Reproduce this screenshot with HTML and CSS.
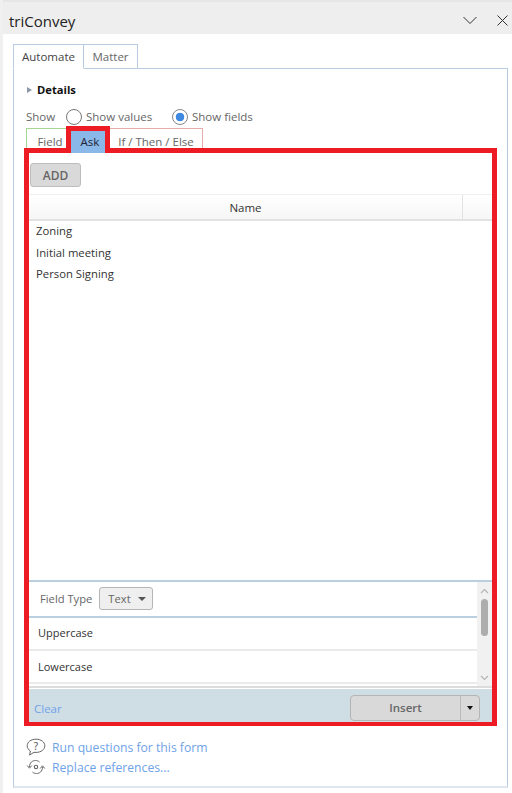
FILE: index.html
```html
<!DOCTYPE html>
<html lang="en">
<head>
    <meta charset="UTF-8">
    <meta name="viewport" content="width=device-width, initial-scale=1.0">
    <title>triConvey</title>
    <link rel="stylesheet" href="styles.css">
</head>
<body>

    <div class="titlebar">
        <span class="app-name">triConvey</span>
        <div class="window-icons">
            <svg width="14" height="9" viewBox="0 0 14 9"><path d="M0.5 1 L7 7.5 L13.5 1" fill="none" stroke="#333" stroke-width="1"/></svg>
            <svg width="11" height="11" viewBox="0 0 11 11"><path d="M0.5 0.5 L10.5 10.5 M10.5 0.5 L0.5 10.5" fill="none" stroke="#333" stroke-width="1"/></svg>
        </div>
    </div>

    <div class="pane">
        <div class="main-tabs">
            <div class="main-tab active">Automate</div>
            <div class="main-tab">Matter</div>
        </div>

        <div class="main-panel">
            <div class="details"><span class="triangle"></span>Details</div>

            <div class="show-row">
                <span class="show-label">Show</span>
                <span class="radio"></span><span class="radio-text">Show values</span>
                <span class="radio checked"></span><span>Show fields</span>
            </div>

            <div class="sub-tabs">
                <div class="sub-tab field">Field</div>
                <div class="sub-tab ask">Ask</div>
                <div class="sub-tab condition">If / Then / Else</div>
            </div>

            <div class="ask-box">
                <div class="add-row"><button class="add-button">ADD</button></div>

                <div class="table-head">
                    <div class="name-col">Name</div>
                    <div class="spare-col"></div>
                </div>

                <div class="name-list">
                    <div>Zoning</div>
                    <div>Initial meeting</div>
                    <div>Person Signing</div>
                </div>

                <div class="options">
                    <div class="options-list">
                        <div class="field-type">
                            <span>Field Type</span>
                            <div class="type-select">Text<span class="caret"></span></div>
                        </div>
                        <div class="option">Uppercase</div>
                        <div class="option">Lowercase</div>
                    </div>
                    <div class="scrollbar">
                        <svg width="9" height="6" viewBox="0 0 9 6"><path d="M1 5 L4.5 1.5 L8 5" fill="none" stroke="#b5b5b5" stroke-width="1.2"/></svg>
                        <div class="thumb"></div>
                        <svg width="9" height="6" viewBox="0 0 9 6"><path d="M1 1 L4.5 4.5 L8 1" fill="none" stroke="#b5b5b5" stroke-width="1.2"/></svg>
                    </div>
                </div>

                <div class="footer">
                    <span class="clear">Clear</span>
                    <div class="insert">
                        <div class="insert-main">Insert</div>
                        <div class="insert-arrow"><span class="small-caret"></span></div>
                    </div>
                </div>
            </div>

            <div class="links">
                <div class="link-row">
                    <svg width="20" height="19" viewBox="0 0 20 19">
                        <path d="M10 1.2 C5 1.2 1.2 4 1.2 7.8 C1.2 10 2.5 11.8 4.4 13 L3.6 17 L8 14.3 C8.7 14.4 9.3 14.4 10 14.4 C15 14.4 18.8 11.6 18.8 7.8 C18.8 4 15 1.2 10 1.2 Z" fill="none" stroke="#666" stroke-width="1"/>
                        <text x="10" y="11.5" font-size="10" text-anchor="middle" fill="#555" font-family="Noto Sans, sans-serif">?</text>
                    </svg>
                    <span>Run questions for this form</span>
                </div>
                <div class="link-row">
                    <svg width="20" height="16" viewBox="0 0 20 16">
                        <circle cx="10" cy="8" r="1.7" fill="none" stroke="#666" stroke-width="1.1"/>
                        <path d="M3.5 8 C3.5 3.5 6.5 1.5 9.5 1.5 C11 1.5 12.5 2 13.5 3" fill="none" stroke="#666" stroke-width="1"/>
                        <path d="M16.5 8 C16.5 12.5 13.5 14.5 10.5 14.5 C9 14.5 7.5 14 6.5 13" fill="none" stroke="#666" stroke-width="1"/>
                        <path d="M1.2 6.5 L3.5 9.2 L5.8 6.5 M14.2 9.5 L16.5 6.8 L18.8 9.5" fill="none" stroke="#666" stroke-width="1"/>
                    </svg>
                    <span>Replace references...</span>
                </div>
            </div>
        </div>
    </div>

</body>
</html>
```

FILE: styles.css
```css
* {
    box-sizing: border-box;
}

html, body {
    height: 793px;
}

body {
    margin: 0;
    font-family: "Open Sans", "Noto Sans", sans-serif;
    font-size: 11.5px;
    color: #666;
    background-color: white;
    overflow: hidden;
    border-left: 3px solid #f0f0f0;
}

.titlebar {
    height: 34px;
    margin-left: -3px;
    padding: 5px 4px 0 9px;
    display: flex;
    align-items: center;
    justify-content: space-between;
    background-color: #eeeeee;
    border-top: 2px solid #e6e6e6;
}

.app-name {
    font-size: 15px;
    color: #222;
}

.window-icons {
    display: flex;
    align-items: center;
    gap: 20px;
}

.pane {
    padding: 10px 4px 0 10px;
}

.main-tabs {
    display: flex;
    height: 25px;
    margin-bottom: -1px;
}

.main-tab {
    width: 54px;
    padding-top: 4px;
    text-align: center;
    border: 1px solid #b8cde2;
    border-left: none;
    background-color: white;
}

.main-tab.active {
    width: 71px;
    color: #444;
    border-left: 1px solid #b8cde2;
    border-bottom-color: white;
    position: relative;
}

.main-panel {
    height: 720px;
    padding: 0 12px;
    border: 1px solid #b8cde2;
    border-bottom-width: 2px;
    border-bottom-color: #dfe6f0;
}

.details {
    height: 41px;
    display: flex;
    align-items: center;
    font-size: 11.2px;
    font-weight: 700;
    color: #111;
}

.triangle {
    width: 0;
    height: 0;
    margin: 0 5px 0 1px;
    border-left: 5px solid #8a98a8;
    border-top: 3px solid transparent;
    border-bottom: 3px solid transparent;
}

.show-row {
    height: 17px;
    margin-top: -2px;
    display: flex;
    align-items: center;
}

.show-label {
    width: 40px;
}

.radio {
    width: 16px;
    height: 16px;
    margin-right: 4px;
    border: 1px solid #777;
    border-radius: 50%;
}

.radio-text {
    width: 86px;
}

.radio.checked {
    background: radial-gradient(circle, #3f8ae0 0, #3f8ae0 4px, white 4.6px);
    border-color: #888;
}

.sub-tabs {
    display: flex;
    height: 20px;
    margin-top: 3px;
}

.sub-tab {
    text-align: center;
    padding-top: 5px;
    border: 1px solid;
    border-bottom: none;
}

.sub-tab.field {
    width: 40px;
    padding-left: 7px;
    border-color: #a5d692;
    border-right: none;
}

.sub-tab.ask {
    width: 44px;
    height: 27px;
    margin-top: -2px;
    padding: 3px 0 0 4px;
    color: #223;
    background-color: #8ab8e8;
    border: 5px solid #ed1c24;
    border-bottom: none;
    line-height: 16px;
    position: relative;
}

.sub-tab.condition {
    width: 93px;
    border-color: #e8aaaa;
    border-left: none;
}

.ask-box {
    height: 578px;
    margin-left: -2px;
    width: 473px;
    display: flex;
    flex-direction: column;
    border: 5px solid #ed1c24;
    border-bottom-width: 4px;
    color: #333;
}

.add-row {
    height: 41px;
    padding: 10px 0 0 1px;
}

.add-button {
    width: 51px;
    height: 24px;
    padding: 0;
    font-family: inherit;
    font-size: 12px;
    font-weight: 600;
    color: #666;
    background-color: #d9d9d9;
    border: 1px solid #bdbdbd;
    border-radius: 3px;
}

.table-head {
    height: 27px;
    display: flex;
    border-top: 1px solid #efefef;
    border-bottom: 2px solid #e2e2e2;
    background: linear-gradient(#ffffff, #f6f6f6);
}

.name-col {
    width: 434px;
    padding-top: 5px;
    text-align: center;
    border-right: 1px solid #e2e2e2;
}

.spare-col {
    flex: 1;
}

.name-list {
    flex: 1;
    margin-top: -1px;
    padding: 0 0 0 7px;
    font-size: 11.3px;
    line-height: 21.5px;
}

.options {
    height: 108px;
    display: flex;
    border-top: 2px solid #bccfdf;
    border-bottom: 2px solid #dcdcdc;
}

.options-list {
    flex: 1;
    overflow: hidden;
}

.field-type {
    height: 36px;
    padding: 0 0 1px 11px;
    display: flex;
    align-items: center;
    gap: 7px;
    font-size: 11.2px;
    color: #666;
    border-bottom: 2px solid #bccfdf;
}

.type-select {
    width: 54px;
    height: 23px;
    padding-left: 8px;
    display: flex;
    align-items: center;
    justify-content: space-between;
    background-color: #efefef;
    border: 1px solid #b5b5b5;
    border-radius: 3px;
}

.caret {
    width: 0;
    height: 0;
    margin-right: 6px;
    border-top: 4px solid #555;
    border-left: 4px solid transparent;
    border-right: 4px solid transparent;
}

.option {
    height: 33px;
    padding: 7px 0 0 9px;
    font-size: 11px;
    border-bottom: 2px solid #eaeaea;
}

.option + .option {
    padding-top: 8px;
}

.scrollbar {
    width: 15px;
    display: flex;
    flex-direction: column;
    align-items: center;
    background-color: #f1f1f1;
    padding-top: 6px;
}

.thumb {
    width: 7px;
    height: 37px;
    margin: 5px 0 39px;
    background-color: #adadad;
    border-radius: 4px;
}

.footer {
    height: 33px;
    margin-top: 1px;
    padding: 5px 12px 0 5px;
    display: flex;
    align-items: center;
    justify-content: space-between;
    background-color: #cfdde5;
}

.clear {
    color: #6fa3e8;
}

.insert {
    width: 130px;
    height: 26px;
    display: flex;
    background-color: #d9d9d9;
    border: 1px solid #b5b5b5;
    border-radius: 4px;
}

.insert-main {
    flex: 1;
    text-align: center;
    line-height: 24px;
    font-weight: 600;
    color: #666;
    border-right: 1px solid #bbb;
}

.insert-arrow {
    width: 18px;
    display: flex;
    align-items: center;
    justify-content: center;
}

.small-caret {
    width: 0;
    height: 0;
    border-top: 4px solid #111;
    border-left: 3px solid transparent;
    border-right: 3px solid transparent;
}

.links {
    margin-top: 11px;
    font-size: 12.2px;
    color: #6fa3e8;
}

.link-row {
    height: 20px;
    display: flex;
    align-items: center;
    gap: 6px;
}
```
